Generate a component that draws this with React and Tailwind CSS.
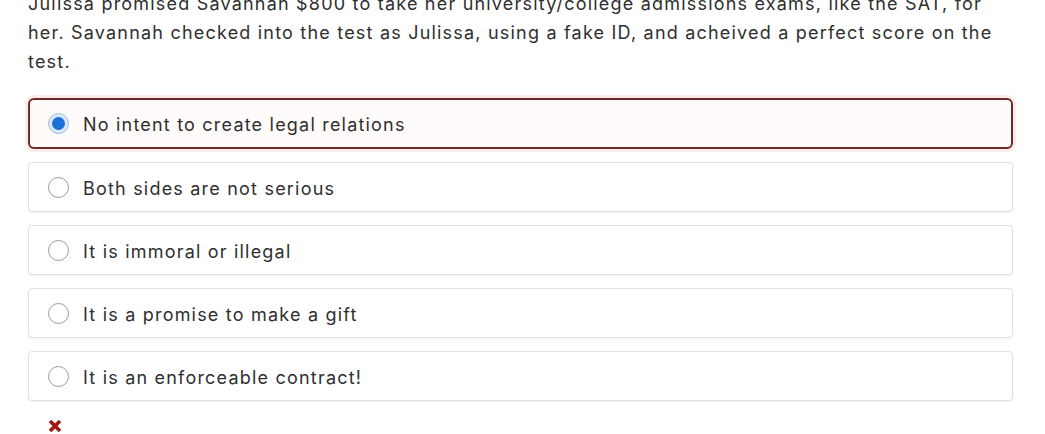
import React from "react";

const options = [
  "No intent to create legal relations",
  "Both sides are not serious",
  "It is immoral or illegal",
  "It is a promise to make a gift",
  "It is an enforceable contract!",
];

export default function App() {
  return (
    <div
      className="w-[1045px] h-[434px] overflow-hidden bg-white text-[#2f2f2f]"
      style={{ fontFamily: "Inter, 'Noto Sans', sans-serif" }}
    >
      <div className="pl-[28px] pr-[32px]">
        <p className="mt-[-11px] text-[18px] leading-[29px] tracking-[1.2px]">
          Julissa promised Savannah $800 to take her university/college admissions exams, like the SAT, for
          her. Savannah checked into the test as Julissa, using a fake ID, and acheived a perfect score on the
          test.
        </p>
        <div className="mt-[22px] flex flex-col gap-[13px]">
          {options.map((o, i) =>
            i === 0 ? (
              <div
                key={o}
                className="h-[51px] flex items-center rounded-[6px] border-2 border-[#6e2b2b] bg-[#fffbfb] shadow-[0_0_0_3px_rgba(230,120,120,0.15)] pl-[18px]"
              >
                <span className="w-[21px] h-[21px] rounded-full border-[1.5px] border-[#9dbbe0] bg-[#dbe8f7] flex items-center justify-center">
                  <span className="w-[13px] h-[13px] rounded-full bg-[#1c6fd8]" />
                </span>
                <span className="ml-[14px] text-[18px] tracking-[1.2px] pt-[2px]">{o}</span>
              </div>
            ) : (
              <div
                key={o}
                className="h-[50px] flex items-center rounded-[4px] border border-[#e1e1e1] bg-white shadow-[0_1px_2px_rgba(0,0,0,0.06)] pl-[19px]"
              >
                <span className="w-[21px] h-[21px] rounded-full border-[1.5px] border-[#9a9a9a]" />
                <span className="ml-[14px] text-[18px] tracking-[1.2px] pt-[2px]">{o}</span>
              </div>
            )
          )}
        </div>
        <div className="mt-[17px] pl-[19px]">
          <svg width="16" height="16" viewBox="0 0 16 16">
            <path d="M3 3 L13 13 M13 3 L3 13" stroke="#9e1616" strokeWidth="3.6" strokeLinecap="butt" />
          </svg>
        </div>
      </div>
    </div>
  );
}
